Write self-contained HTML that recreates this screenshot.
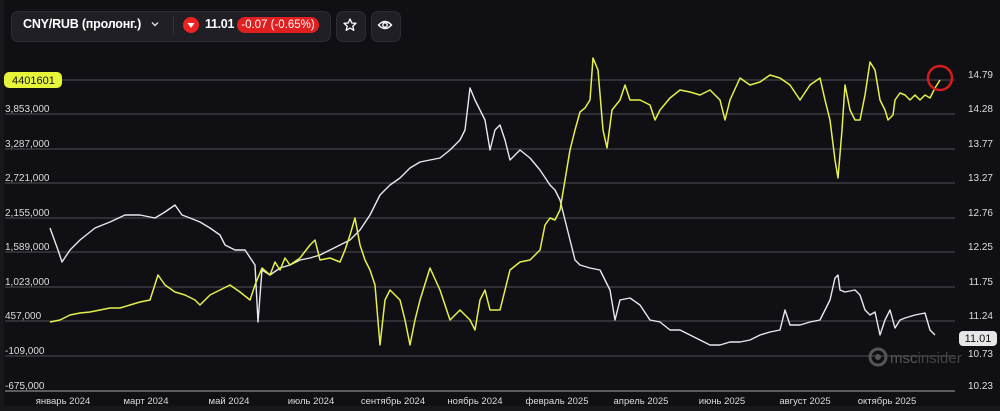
<!DOCTYPE html><html><head><meta charset="utf-8"><style>
body{margin:0;width:1000px;height:411px;background:#18181c;overflow:hidden;font-family:"Liberation Sans",sans-serif;}
.p{position:absolute;left:4px;top:0;width:996px;height:406px;background:#0f0f14;}
.tb{position:absolute;top:11px;height:29px;border-radius:7px;background:#1f1f25;border:1px solid #2c2c33;}
</style></head><body><div class="p"></div>
<div class="tb" style="left:11px;width:318px"></div>
<div class="tb" style="left:336px;width:28px"></div>
<div class="tb" style="left:371px;width:28px"></div>
<div style="position:absolute;left:23px;top:17px;color:#fff;font-weight:bold;font-size:12.5px;letter-spacing:-0.2px">CNY/RUB (пролонг.)</div>
<svg style="position:absolute;left:151px;top:21px" width="8" height="6"><path d="M1 1.5 L4 4.5 L7 1.5" fill="none" stroke="#ddd" stroke-width="1.4"/></svg>
<div style="position:absolute;left:173px;top:16px;width:1px;height:19px;background:#333"></div>
<div style="position:absolute;left:183px;top:17px;width:16px;height:16px;border-radius:50%;background:#e22"></div>
<svg style="position:absolute;left:183px;top:17px" width="16" height="16"><path d="M4.5 6 L11.5 6 L8 11Z" fill="#fff"/></svg>
<div style="position:absolute;left:205px;top:17px;color:#fff;font-weight:bold;font-size:12.5px;letter-spacing:-0.3px">11.01</div>
<div style="position:absolute;left:237px;top:17px;width:82px;height:16px;border-radius:8px;background:#e01f1f;color:#fff;font-size:11.5px;line-height:16px;text-align:center">-0.07 (-0.65%)</div>
<svg style="position:absolute;left:342px;top:17px" width="16" height="16"><path d="M8 2 L9.8 6 L14 6.3 L10.8 9.1 L11.8 13.3 L8 11 L4.2 13.3 L5.2 9.1 L2 6.3 L6.2 6Z" fill="none" stroke="#fff" stroke-width="1.3" stroke-linejoin="round"/></svg>
<svg style="position:absolute;left:377px;top:17px" width="16" height="16"><path d="M1.5 8 Q8 1 14.5 8 Q8 15 1.5 8Z" fill="none" stroke="#fff" stroke-width="1.4"/><circle cx="8" cy="8" r="2.2" fill="none" stroke="#fff" stroke-width="1.4"/></svg>
<svg style="position:absolute;left:0;top:0" width="1000" height="411" font-family="Liberation Sans" font-size="10">
<g stroke="#3a3a40" stroke-width="1.5">
<line x1="5" y1="80" x2="955" y2="80"/><line x1="5" y1="114" x2="955" y2="114"/><line x1="5" y1="149" x2="955" y2="149"/><line x1="5" y1="183" x2="955" y2="183"/><line x1="5" y1="218" x2="955" y2="218"/><line x1="5" y1="252" x2="955" y2="252"/><line x1="5" y1="287" x2="955" y2="287"/><line x1="5" y1="321" x2="955" y2="321"/><line x1="5" y1="356" x2="955" y2="356"/><line x1="5" y1="391" x2="955" y2="391" stroke="#777"/></g>
<g fill="#ddd" stroke="none"><text x="5" y="112">3,853,000</text><text x="5" y="147">3,287,000</text><text x="5" y="181">2,721,000</text><text x="5" y="216">2,155,000</text><text x="5" y="250">1,589,000</text><text x="5" y="285">1,023,000</text><text x="5" y="319">457,000</text><text x="5" y="354">-109,000</text><text x="5" y="389">-675,000</text>
<g text-anchor="end"><text x="993" y="78">14.79</text><text x="993" y="112">14.28</text><text x="993" y="147">13.77</text><text x="993" y="181">13.27</text><text x="993" y="216">12.76</text><text x="993" y="250">12.25</text><text x="993" y="285">11.75</text><text x="993" y="319">11.24</text><text x="993" y="357">10.73</text><text x="993" y="389">10.23</text></g>
<g text-anchor="middle" font-size="9.5"><text x="63" y="404">январь 2024</text><text x="146" y="404">март 2024</text><text x="229" y="404">май 2024</text><text x="311" y="404">июль 2024</text><text x="393" y="404">сентябрь 2024</text><text x="475" y="404">ноябрь 2024</text><text x="557" y="404">февраль 2025</text><text x="641" y="404">апрель 2025</text><text x="722" y="404">июнь 2025</text><text x="805" y="404">август 2025</text><text x="887" y="404">октябрь 2025</text></g></g>
<polyline fill="none" stroke="#e8e8ee" stroke-width="1.4" stroke-linejoin="round" points="50,228 58,250 62,262 70,250 80,240 95,228 110,222 125,215 140,215 155,218 165,212 175,205 182,215 190,218 200,222 210,228 220,235 225,245 235,250 245,250 255,265 258,322 262,270 270,275 280,268 290,265 300,260 310,258 320,255 330,250 340,245 350,240 360,230 370,215 380,195 390,185 400,178 410,168 420,162 430,160 440,158 450,150 460,140 465,130 470,88 475,100 480,110 485,120 490,150 495,130 500,125 505,140 510,160 520,150 530,158 540,170 550,185 555,190 560,200 565,220 570,240 575,260 580,265 590,268 600,270 610,290 615,320 620,300 630,298 640,305 650,320 660,322 670,330 680,330 690,335 700,340 710,345 720,345 730,342 740,342 750,340 760,335 770,332 780,330 785,310 790,325 800,325 810,322 820,320 830,300 835,278 838,275 840,290 845,292 855,290 860,295 865,310 870,315 875,312 880,335 885,320 890,310 895,328 900,320 905,318 915,315 925,313 930,330 935,335"/>
<polyline fill="none" stroke="#e6f04a" stroke-width="1.5" stroke-linejoin="round" points="50,322 60,320 70,315 80,313 90,312 100,310 110,308 120,308 130,305 140,302 150,300 158,275 165,285 175,292 185,295 195,300 200,305 210,295 220,290 230,285 240,292 250,300 255,285 262,268 270,275 275,262 280,270 285,258 290,265 300,258 310,245 315,240 320,260 330,258 340,262 345,250 350,235 355,218 360,245 365,260 370,270 375,285 380,345 385,300 390,290 400,300 405,320 410,345 415,320 420,300 430,268 440,290 450,320 460,310 470,320 475,330 480,300 485,290 490,310 500,310 505,290 510,270 520,262 530,260 540,250 545,225 550,218 555,220 560,210 565,180 570,150 575,130 580,112 585,108 590,100 593,58 598,70 603,130 607,148 612,110 620,100 625,85 630,100 640,100 650,105 655,120 660,110 670,98 680,90 690,92 700,95 710,90 720,100 725,120 730,100 740,78 750,85 760,82 770,75 780,78 790,85 800,100 810,85 820,78 825,100 830,120 835,160 838,178 842,130 845,85 850,110 855,120 860,120 865,95 870,62 875,70 880,100 885,110 888,120 893,115 895,100 900,93 905,95 910,100 915,95 920,100 925,95 930,98 935,88 940,80"/>
<circle cx="940" cy="78" r="12" fill="none" stroke="#d41c1c" stroke-width="2.5"/>
<rect x="4" y="72" width="58" height="16" rx="5" fill="#e6f53a"/><text x="12" y="84" font-size="11" fill="#111">4401601</text>
<rect x="959" y="331" width="38" height="15" rx="4" fill="#e6e6e6"/><text x="978" y="342" font-size="11" fill="#111" text-anchor="middle">11.01</text>
<circle cx="878" cy="357" r="8" fill="none" stroke="#555" stroke-width="3"/><circle cx="878" cy="357" r="3" fill="#555"/>
<text x="890" y="363" font-size="15" fill="#555">msc<tspan fill="#444">insider</tspan></text>
</svg></body></html>
